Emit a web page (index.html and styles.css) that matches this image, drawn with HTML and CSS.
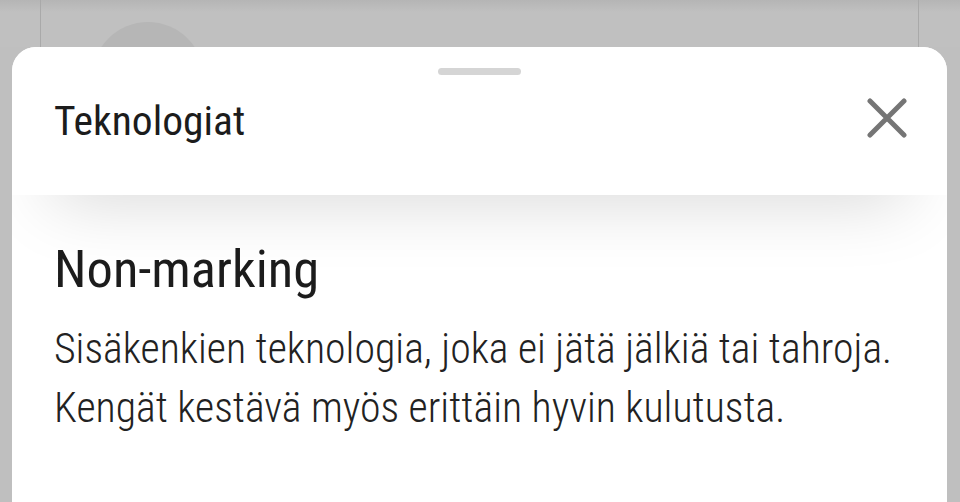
FILE: index.html
```html
<!DOCTYPE html>
<html lang="fi">
<head>
  <meta charset="utf-8">
  <title>Teknologiat</title>
  <link rel="stylesheet" href="styles.css">
</head>
<body>
  <div class="backdrop">
    <div class="page-behind">
      <div class="avatar"></div>
    </div>
  </div>

  <div class="sheet">
    <div class="sheet-top">
      <div class="handle"></div>
      <div class="sheet-header">
        <h2 class="sheet-title">Teknologiat</h2>
        <button class="close-btn" aria-label="Sulje">
          <svg width="40" height="40" viewBox="0 0 40 40">
            <path d="M3 3 L37 37 M37 3 L3 37" stroke="#757575" stroke-width="5" stroke-linecap="round"/>
          </svg>
        </button>
      </div>
    </div>

    <div class="sheet-body">
      <h3 class="tech-name">Non-marking</h3>
      <p class="tech-text">Sisäkenkien teknologia, joka ei jätä jälkiä tai tahroja. Kengät kestävä myös erittäin hyvin kulutusta.</p>
    </div>
  </div>
</body>
</html>
```

FILE: styles.css
```css
html, body {
  margin: 0;
  height: 100%;
  overflow: hidden;
}

body {
  display: flex;
  flex-direction: column;
  font-family: Roboto, "Noto Sans", Arial, sans-serif;
  font-stretch: condensed;
  background-color: #bfbfbf;
  color: #1c1c1c;
}

/* dimmed page under the sheet */
.backdrop {
  flex: none;
  height: 47px;
  background: linear-gradient(#b5b5b5, #c0c0c0 12px);
  padding: 0 41px 0 40px;
}

.page-behind {
  height: 100%;
  border-left: 1px solid #a9a9a9;
  border-right: 1px solid #a9a9a9;
  overflow: hidden;
}

.avatar {
  width: 112px;
  height: 112px;
  margin: 22px 0 0 51px;
  border-radius: 50%;
  background-color: #b6b6b6;
}

.sheet {
  flex: 1;
  margin: 0 13px 0 12px;
  background-color: #ffffff;
  border-radius: 24px 24px 0 0;
  overflow: hidden;
}

.sheet-top {
  position: relative;
  z-index: 1;
  background-color: #ffffff;
  padding-top: 21px;
  box-shadow: 0 44px 70px -40px rgba(0, 0, 0, 0.17);
}

.handle {
  width: 83px;
  height: 7px;
  margin: 0 auto;
  border-radius: 4px;
  background-color: #d5d5d5;
}

.sheet-header {
  display: flex;
  justify-content: space-between;
  align-items: center;
  padding: 21px 40px 49px 42px;
}

.sheet-title {
  margin: 0;
  font-size: 41.5px;
  font-weight: 400;
  line-height: 50px;
}

.close-btn {
  border: none;
  background: none;
  padding: 0;
  width: 40px;
  height: 40px;
  margin-top: -6px;
}

.sheet-body {
  padding: 43px 40px 0 42px;
}

.tech-name {
  margin: 0;
  font-size: 52.5px;
  font-weight: 400;
  line-height: 62px;
}

.tech-text {
  margin: 19px 0 0;
  font-size: 41.8px;
  font-weight: 300;
  line-height: 59px;
  color: #222;
}
```
